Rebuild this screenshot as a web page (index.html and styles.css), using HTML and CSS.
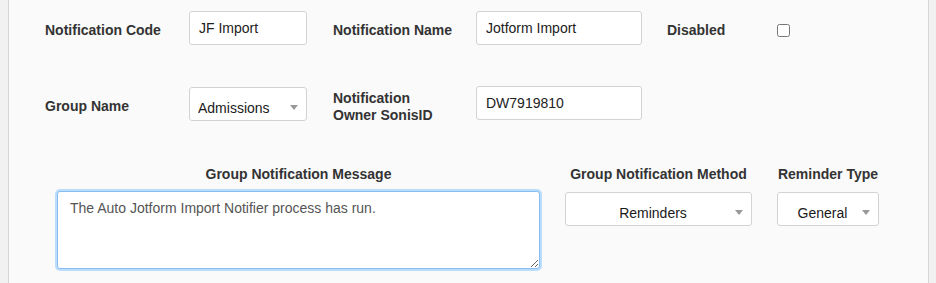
FILE: index.html
```html
<!DOCTYPE html>
<html lang="en">
<head>
  <meta charset="UTF-8">
  <meta name="viewport" content="width=device-width, initial-scale=1.0">
  <title>Group Notification</title>
  <link rel="stylesheet" href="styles.css">
</head>
<body>
  <div class="page">
    <div class="panel">
      <div class="form-grid">
        <label class="field-label">Notification Code</label>
        <div class="cell"><input class="text-input w-code" type="text" value="JF Import"></div>
        <label class="field-label">Notification Name</label>
        <div class="cell"><input class="text-input w-name" type="text" value="Jotform Import"></div>
        <label class="field-label">Disabled</label>
        <div class="cell"><input class="check" type="checkbox"></div>

        <label class="field-label">Group Name</label>
        <div class="cell">
          <div class="select-wrap w-code">
            <select class="select-input"><option>Admissions</option></select>
          </div>
        </div>
        <label class="field-label">Notification<br>Owner SonisID</label>
        <div class="cell"><input class="text-input w-name owner" type="text" value="DW7919810"></div>
      </div>

      <div class="message-row">
        <div class="message-col col-message">
          <label class="col-label">Group Notification Message</label>
          <textarea class="message-box">The Auto Jotform Import Notifier process has run.</textarea>
        </div>
        <div class="message-col col-method">
          <label class="col-label">Group Notification Method</label>
          <div class="select-wrap">
            <select class="select-input centered"><option>Reminders</option></select>
          </div>
        </div>
        <div class="message-col col-type">
          <label class="col-label">Reminder Type</label>
          <div class="select-wrap">
            <select class="select-input centered"><option>General</option></select>
          </div>
        </div>
      </div>
    </div>
  </div>
</body>
</html>
```

FILE: styles.css
```css
/* General */
body {
  margin: 0;
  font-family: "Liberation Sans", Arial, Helvetica, sans-serif;
  font-size: 14px;
  color: #333;
  background: #f1f1f1;
}

.page {
  padding-left: 8px;
  height: 283px;
  overflow: hidden;
}

.panel {
  width: 921px;
  height: 100%;
  box-sizing: border-box;
  background: #fafafa;
  border-left: 1px solid #d6d6d6;
  border-right: 1px solid #d6d6d6;
  padding: 11px 0 0 36px;
}

/* Top fields */
.form-grid {
  display: grid;
  grid-template-columns: 144px 144px 143px 191px 110px auto;
  grid-auto-rows: 34px;
  row-gap: 42px;
  align-items: center;
}

.field-label {
  font-weight: bold;
  line-height: 17px;
  padding-top: 5px;
}

.cell {
  display: flex;
  align-items: center;
  height: 34px;
}

.text-input {
  height: 34px;
  box-sizing: border-box;
  padding: 0 9px;
  border: 1px solid #d3d3d3;
  border-radius: 3px;
  background: #fff;
  font: inherit;
  color: #222;
  outline: none;
}

.text-input.owner {
  margin-top: -2px;
}

.w-code {
  width: 118px;
}

.w-name {
  width: 166px;
}

.check {
  width: 13px;
  height: 13px;
  margin: 5px 0 0;
}

/* Selects */
.select-wrap {
  position: relative;
}

.select-wrap::after {
  content: "";
  position: absolute;
  right: 9px;
  top: 18px;
  border-left: 4px solid transparent;
  border-right: 4px solid transparent;
  border-top: 5px solid #999;
  pointer-events: none;
}

.select-input {
  appearance: none;
  -webkit-appearance: none;
  width: 100%;
  height: 34px;
  box-sizing: border-box;
  padding: 8px 24px 0 8px;
  border: 1px solid #d3d3d3;
  border-radius: 3px;
  background: #fff;
  font: inherit;
  color: #1a1a1a;
  outline: none;
}

.select-input.centered {
  text-align: center;
  text-align-last: center;
  padding-left: 9px;
  padding-right: 20px;
}

/* Message row */
.message-row {
  display: flex;
  gap: 25px;
  margin-top: 45px;
  padding-left: 12px;
}

.message-col {
  display: flex;
  flex-direction: column;
  align-items: stretch;
}

.col-label {
  font-weight: bold;
  text-align: center;
  line-height: 17px;
  margin-bottom: 8px;
}

.col-message {
  width: 483px;
}

.col-method {
  width: 187px;
}

.col-type {
  width: 102px;
}

.col-method .select-wrap,
.col-type .select-wrap {
  margin-top: 1px;
}

.message-box {
  height: 78px;
  box-sizing: border-box;
  padding: 6px 12px;
  border: 1px solid #86bdf3;
  border-radius: 3px;
  box-shadow: 0 0 0 2px #bcdcfc;
  font: inherit;
  line-height: 20px;
  color: #555;
  background: #fff;
  outline: none;
  resize: vertical;
}
```
